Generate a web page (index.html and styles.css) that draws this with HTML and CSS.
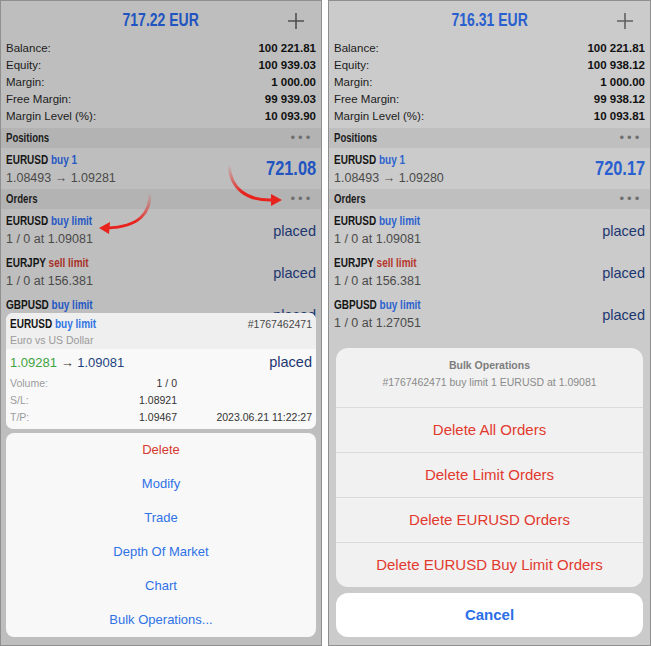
FILE: index.html
```html
<!DOCTYPE html>
<html lang="en">
<head>
    <meta charset="UTF-8">
    <meta name="viewport" content="width=device-width, initial-scale=1.0">
    <title>Orders</title>
    <link rel="stylesheet" href="styles.css">
</head>
<body>
    <div class="screens">
        <!-- Left screen: order menu -->
        <div class="phone dim-dark">
            <div class="title-bar">
                <span class="title">717.22 EUR</span>
                <svg class="plus" width="16" height="16" viewBox="0 0 16 16"><path d="M8 0v16M0 8h16" stroke="#505050" stroke-width="1.6"/></svg>
            </div>
            <div class="stats">
                <div class="stat"><span>Balance:</span><b>100 221.81</b></div>
                <div class="stat"><span>Equity:</span><b>100 939.03</b></div>
                <div class="stat"><span>Margin:</span><b>1 000.00</b></div>
                <div class="stat"><span>Free Margin:</span><b>99 939.03</b></div>
                <div class="stat"><span>Margin Level (%):</span><b>10 093.90</b></div>
            </div>
            <div class="section"><span class="cond">Positions</span><span class="dots">•••</span></div>
            <div class="row row-pos">
                <div class="row-main">
                    <div class="sym"><span class="cond">EURUSD <span class="buy">buy 1</span></span></div>
                    <div class="sub">1.08493 → 1.09281</div>
                </div>
                <div class="profit">721.08</div>
            </div>
            <div class="section"><span class="cond">Orders</span><span class="dots">•••</span></div>
            <div class="row">
                <div class="row-main">
                    <div class="sym"><span class="cond">EURUSD <span class="buy">buy limit</span></span></div>
                    <div class="sub">1 / 0 at 1.09081</div>
                </div>
                <div class="state">placed</div>
            </div>
            <div class="row">
                <div class="row-main">
                    <div class="sym"><span class="cond">EURJPY <span class="sell">sell limit</span></span></div>
                    <div class="sub">1 / 0 at 156.381</div>
                </div>
                <div class="state">placed</div>
            </div>
            <div class="row">
                <div class="row-main">
                    <div class="sym"><span class="cond">GBPUSD <span class="buy">buy limit</span></span></div>
                    <div class="sub">1 / 0 at 1.27051</div>
                </div>
                <div class="state">placed</div>
            </div>

            <svg class="arrows" width="320" height="644" viewBox="0 0 320 644">
                <defs>
                    <linearGradient id="fadeA" gradientUnits="userSpaceOnUse" x1="150" y1="192" x2="138" y2="222">
                        <stop offset="0" stop-color="#e8221c" stop-opacity="0"/>
                        <stop offset="1" stop-color="#e8221c"/>
                    </linearGradient>
                    <linearGradient id="fadeB" gradientUnits="userSpaceOnUse" x1="228" y1="164" x2="240" y2="192">
                        <stop offset="0" stop-color="#e8221c" stop-opacity="0"/>
                        <stop offset="1" stop-color="#e8221c"/>
                    </linearGradient>
                </defs>
                <path d="M149 191 C150 212 138 226 106 227" fill="none" stroke="url(#fadeA)" stroke-width="3"/>
                <path d="M98 227 L109 221 L108 233 Z" fill="#e8221c"/>
                <path d="M228 163 C229 188 246 200 272 199" fill="none" stroke="url(#fadeB)" stroke-width="3"/>
                <path d="M281 199 L270 193 L270 205 Z" fill="#e8221c"/>
            </svg>

            <div class="overlay">
                <div class="order-card">
                    <div class="card-head">
                        <div class="card-line">
                            <span class="sym"><span class="cond">EURUSD <span class="buy-light">buy limit</span></span></span>
                            <span class="ticket">#1767462471</span>
                        </div>
                        <div class="card-desc">Euro vs US Dollar</div>
                    </div>
                    <div class="card-body">
                        <div class="card-line card-price">
                            <span><span class="green">1.09281</span> <span class="arrow">→</span> <span class="navy">1.09081</span></span>
                            <span class="state">placed</span>
                        </div>
                        <div class="detail"><span class="dlabel">Volume:</span><span class="dval">1 / 0</span><span></span></div>
                        <div class="detail"><span class="dlabel">S/L:</span><span class="dval">1.08921</span><span></span></div>
                        <div class="detail"><span class="dlabel">T/P:</span><span class="dval">1.09467</span><span class="ddate">2023.06.21 11:22:27</span></div>
                    </div>
                </div>
                <div class="menu">
                    <div class="menu-item danger">Delete</div>
                    <div class="menu-item">Modify</div>
                    <div class="menu-item">Trade</div>
                    <div class="menu-item">Depth Of Market</div>
                    <div class="menu-item">Chart</div>
                    <div class="menu-item">Bulk Operations...</div>
                </div>
            </div>
        </div>

        <!-- Right screen: bulk operations -->
        <div class="phone dim-light">
            <div class="title-bar">
                <span class="title">716.31 EUR</span>
                <svg class="plus" width="16" height="16" viewBox="0 0 16 16"><path d="M8 0v16M0 8h16" stroke="#606060" stroke-width="1.6"/></svg>
            </div>
            <div class="stats">
                <div class="stat"><span>Balance:</span><b>100 221.81</b></div>
                <div class="stat"><span>Equity:</span><b>100 938.12</b></div>
                <div class="stat"><span>Margin:</span><b>1 000.00</b></div>
                <div class="stat"><span>Free Margin:</span><b>99 938.12</b></div>
                <div class="stat"><span>Margin Level (%):</span><b>10 093.81</b></div>
            </div>
            <div class="section"><span class="cond">Positions</span><span class="dots">•••</span></div>
            <div class="row row-pos">
                <div class="row-main">
                    <div class="sym"><span class="cond">EURUSD <span class="buy">buy 1</span></span></div>
                    <div class="sub">1.08493 → 1.09280</div>
                </div>
                <div class="profit">720.17</div>
            </div>
            <div class="section"><span class="cond">Orders</span><span class="dots">•••</span></div>
            <div class="row">
                <div class="row-main">
                    <div class="sym"><span class="cond">EURUSD <span class="buy">buy limit</span></span></div>
                    <div class="sub">1 / 0 at 1.09081</div>
                </div>
                <div class="state">placed</div>
            </div>
            <div class="row">
                <div class="row-main">
                    <div class="sym"><span class="cond">EURJPY <span class="sell">sell limit</span></span></div>
                    <div class="sub">1 / 0 at 156.381</div>
                </div>
                <div class="state">placed</div>
            </div>
            <div class="row">
                <div class="row-main">
                    <div class="sym"><span class="cond">GBPUSD <span class="buy">buy limit</span></span></div>
                    <div class="sub">1 / 0 at 1.27051</div>
                </div>
                <div class="state">placed</div>
            </div>

            <div class="overlay overlay-wide">
                <div class="bulk">
                    <div class="bulk-head">
                        <div class="bulk-title">Bulk Operations</div>
                        <div class="bulk-desc">#1767462471 buy limit 1 EURUSD at 1.09081</div>
                    </div>
                    <div class="bulk-item">Delete All Orders</div>
                    <div class="bulk-item">Delete Limit Orders</div>
                    <div class="bulk-item">Delete EURUSD Orders</div>
                    <div class="bulk-item">Delete EURUSD Buy Limit Orders</div>
                </div>
                <div class="cancel">Cancel</div>
            </div>
        </div>
    </div>
</body>
</html>
```

FILE: styles.css
```css
body {
    margin: 0;
    background: #fff;
    font-family: "Liberation Sans", Arial, sans-serif;
}

.screens {
    display: flex;
    gap: 6px;
}

.phone {
    position: relative;
    box-sizing: border-box;
    width: 322px;
    height: 646px;
    border: 1px solid #8f8f8f;
    overflow: hidden;
    color: #1c1c1c;
}

.phone + .phone {
    width: 323px;
}

.dim-dark {
    background: #bebebe;
}

.dim-light {
    background: #cbcbcb;
}

/* narrow bold face, squeezed from Liberation Sans */
.cond {
    display: inline-block;
    white-space: nowrap;
    transform: scaleX(0.8);
    transform-origin: left center;
}

/* header */
.title-bar {
    position: relative;
    height: 39px;
    display: flex;
    align-items: center;
    justify-content: center;
}

.title {
    display: inline-block;
    font-weight: bold;
    font-size: 17.5px;
    color: #2154c0;
    transform: scaleX(0.8);
}

.dim-light .title {
    color: #2a5fcf;
}

.plus {
    position: absolute;
    right: 17px;
    top: 12px;
}

.stats {
    padding: 0 5px 3px;
}

.stat {
    display: flex;
    justify-content: space-between;
    height: 17px;
    line-height: 17px;
    font-size: 11.5px;
}

.stat b {
    color: #111;
}

/* list */
.section {
    display: flex;
    justify-content: space-between;
    align-items: center;
    height: 20px;
    padding: 0 9px 0 5px;
    background: #b3b3b3;
    font-weight: bold;
    font-size: 12px;
}

.dim-light .section {
    background: #bfbfbf;
}

.dots {
    color: #6f6f6f;
    font-size: 12px;
    letter-spacing: 0.5px;
    font-weight: normal;
    font-family: "DejaVu Sans", sans-serif;
}

.row {
    display: flex;
    justify-content: space-between;
    align-items: center;
    height: 42px;
    padding: 0 5px;
}

.row-pos {
    height: 41px;
}

.row-main {
    display: flex;
    flex-direction: column;
    gap: 4px;
}

.sym {
    font-weight: bold;
    font-size: 12.5px;
    color: #151515;
}

.buy {
    color: #2558c4;
}

.dim-light .buy {
    color: #2b62d0;
}

.sell {
    color: #a8322a;
}

.dim-light .sell {
    color: #b6372d;
}

.sub {
    font-size: 12.5px;
    color: #4a4a4a;
}

.profit {
    display: inline-block;
    font-weight: bold;
    font-size: 20px;
    color: #2154c0;
    transform: scaleX(0.82);
    transform-origin: right center;
}

.dim-light .profit {
    color: #2a5fcf;
}

.state {
    font-size: 14.5px;
    color: #1d3770;
    padding-top: 2px;
}

/* arrows */
.arrows {
    position: absolute;
    left: 0;
    top: 0;
}

/* bottom sheets */
.overlay {
    position: absolute;
    left: 5px;
    right: 5px;
    bottom: 8px;
    display: flex;
    flex-direction: column;
    gap: 4px;
}

.overlay-wide {
    left: 7px;
    right: 7px;
    gap: 6px;
}

.order-card {
    border-radius: 7px;
    overflow: hidden;
    background: #f9f9f9;
}

.card-head {
    background: #efefef;
    padding: 4px 4px 3px;
    height: 29px;
}

.card-line {
    display: flex;
    justify-content: space-between;
    align-items: center;
}

.ticket {
    font-size: 10.5px;
    color: #474747;
}

.buy-light {
    color: #2f74e3;
}

.card-desc {
    margin-top: 3px;
    font-size: 10.5px;
    color: #9a9a9a;
}

.card-body {
    padding: 2px 4px 3px;
}

.card-price {
    height: 22px;
    font-size: 13px;
    margin-bottom: 2px;
}

.card-price .state {
    font-size: 14.5px;
    padding: 0;
}

.green {
    color: #3fa33f;
}

.navy {
    color: #22427e;
}

.arrow {
    color: #333;
}

.detail {
    display: grid;
    grid-template-columns: 120px 47px 1fr;
    height: 17px;
    line-height: 17px;
    font-size: 10.5px;
}

.dlabel {
    color: #9c9c9c;
}

.dval {
    color: #333;
    text-align: right;
}

.ddate {
    color: #333;
    text-align: right;
}

.menu {
    background: #f8f8f8;
    border-radius: 8px;
}

.menu-item {
    height: 34px;
    line-height: 34px;
    text-align: center;
    font-size: 13px;
    color: #2f72e6;
}

.menu-item.danger {
    color: #d63a2f;
}

.bulk {
    background: #f1f1f1;
    border-radius: 12px;
    overflow: hidden;
}

.bulk-head {
    height: 60px;
    box-sizing: border-box;
    padding-top: 11px;
    text-align: center;
    border-bottom: 1px solid #dadada;
}

.bulk-title {
    font-size: 10.5px;
    font-weight: bold;
    color: #7d7d7d;
}

.bulk-desc {
    margin-top: 5px;
    font-size: 10.5px;
    color: #8a8a8a;
}

.bulk-item {
    height: 44px;
    line-height: 44px;
    text-align: center;
    font-size: 15px;
    color: #e2392e;
    border-bottom: 1px solid #dadada;
}

.bulk-item:last-child {
    border-bottom: none;
}

.cancel {
    height: 44px;
    line-height: 44px;
    background: #fff;
    border-radius: 12px;
    text-align: center;
    font-size: 15px;
    font-weight: bold;
    color: #2b6fe6;
}
```
